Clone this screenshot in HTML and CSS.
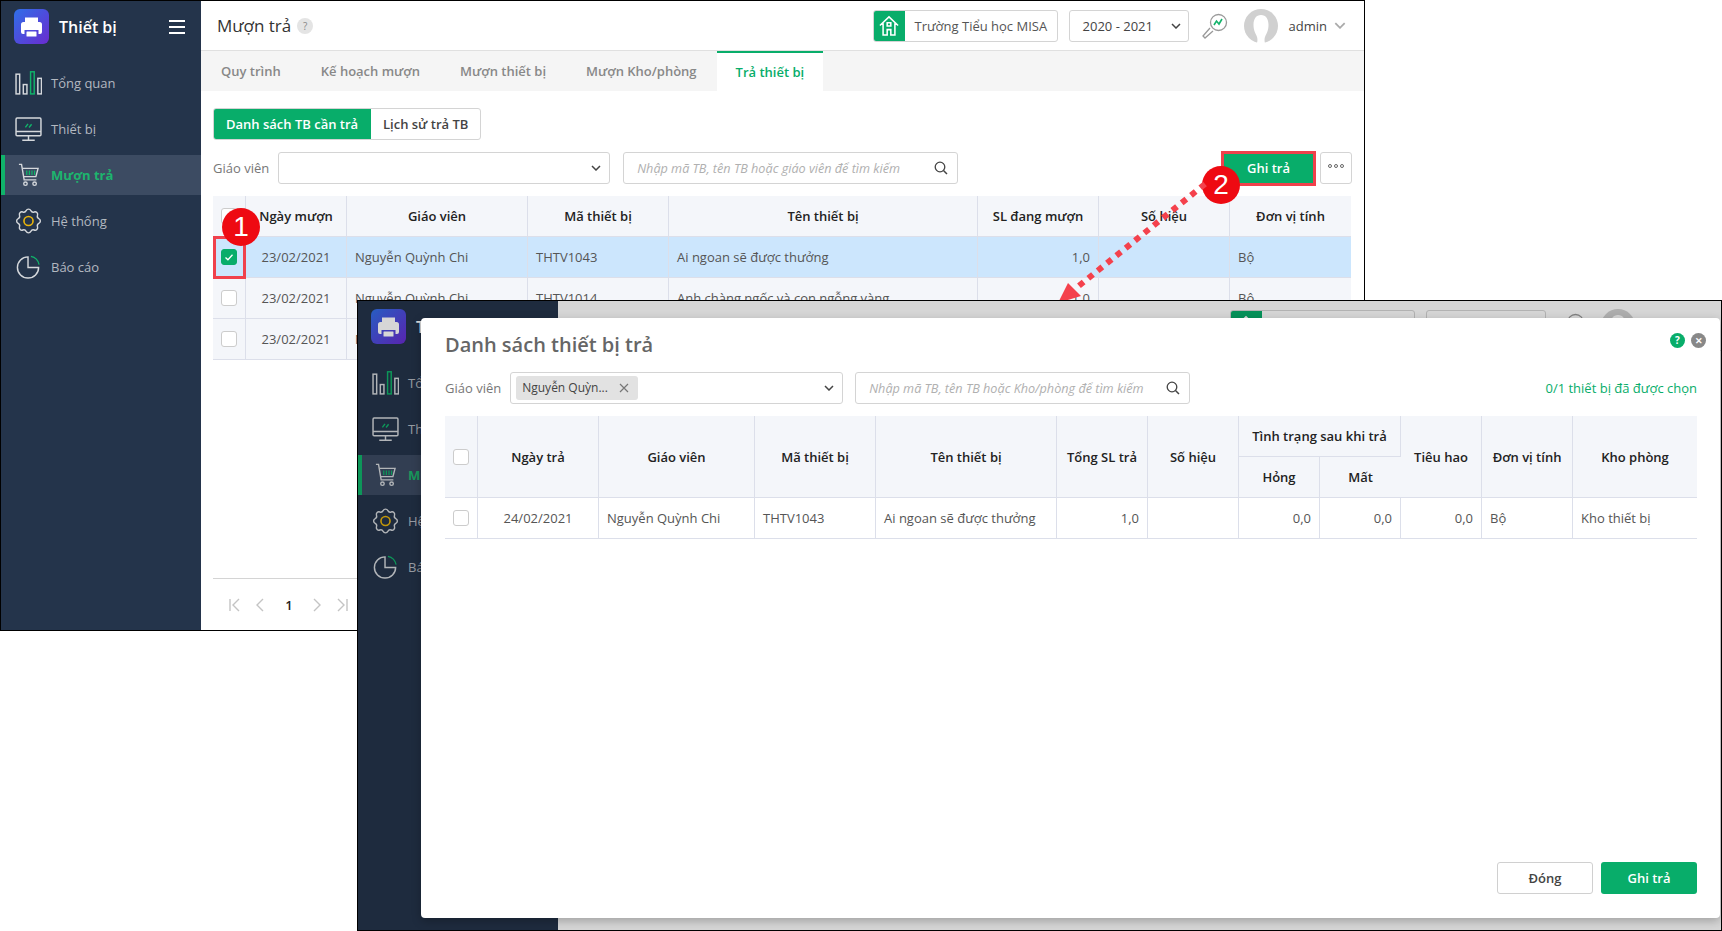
FILE: index.html
```html
<!DOCTYPE html>
<html lang="vi">
<head>
<meta charset="utf-8">
<title>Mượn trả</title>
<link rel="stylesheet" href="styles.css">
</head>
<body>
<svg class="defs" width="0" height="0" aria-hidden="true">
  <defs>
    <linearGradient id="logoGrad" x1="0" y1="0" x2="1" y2="1">
      <stop offset="0" stop-color="#2f6fe8"/><stop offset="1" stop-color="#6a2bd0"/>
    </linearGradient>
  </defs>
  <symbol id="i-logo" viewBox="0 0 35 35">
    <rect width="35" height="35" rx="6" fill="url(#logoGrad)"/>
    <path d="M11 13V8.500h13V13z" fill="#fff"/>
    <path d="M9.500 13h16a2.500 2.500 0 0 1 2.500 2.500V23a2 2 0 0 1-2 2h-1.500v-4h-14v4H9a2 2 0 0 1-2-2v-7.500A2.500 2.500 0 0 1 9.500 13z" fill="#fff"/>
    <rect x="12.500" y="22.500" width="10" height="5" rx=".5" fill="#fff"/>
  </symbol>
  <symbol id="i-bars" viewBox="0 0 26 23">
    <g fill="none" stroke="#d5d8dc" stroke-width="1.400">
      <rect x="1" y="3" width="3.500" height="19"/>
      <rect x="8" y="13" width="3.500" height="9"/>
      <rect x="22" y="7" width="3.500" height="15"/>
      <rect x="15" y=".7" width="3.500" height="21.300" stroke="#10b36a"/>
    </g>
  </symbol>
  <symbol id="i-monitor" viewBox="0 0 26 23">
    <g fill="none" stroke="#d5d8dc" stroke-width="1.400">
      <rect x="1" y="1" width="24" height="17" rx="1"/>
      <path d="M1 14h24M13 18v4M7 22.300h12"/>
    </g>
    <path d="M10 10l2.500-3.500M13.500 10l2.500-3" stroke="#10b36a" stroke-width="1.400" fill="none"/>
  </symbol>
  <symbol id="i-cart" viewBox="-3.500 -3 31 34" preserveAspectRatio="none">
    <g fill="none" stroke="#d5d8dc" stroke-width="1.600">
      <path d="M1 1h3l3 19h14"/>
      <path d="M5 6h18l-2.500 10H6.500"/>
      <circle cx="8.500" cy="24.500" r="2"/><circle cx="19" cy="24.500" r="2"/>
    </g>
    <path d="M10 8.500v5.500M13 8.500v5.500M16 8.500v5.500M19 8.500v5.500" stroke="#10b36a" stroke-width="1.400"/>
  </symbol>
  <symbol id="i-gear" viewBox="0.500 0.500 25 25">
    <path d="M22.550 10.800A2.400 2.400 0 0 1 22.550 15.200A2.500 2.500 0 0 0 21.310 18.190A2.400 2.400 0 0 1 18.190 21.310A2.500 2.500 0 0 0 15.200 22.550A2.400 2.400 0 0 1 10.800 22.550A2.500 2.500 0 0 0 7.810 21.310A2.400 2.400 0 0 1 4.690 18.190A2.500 2.500 0 0 0 3.450 15.200A2.400 2.400 0 0 1 3.450 10.800A2.500 2.500 0 0 0 4.690 7.810A2.400 2.400 0 0 1 7.810 4.690A2.500 2.500 0 0 0 10.800 3.450A2.400 2.400 0 0 1 15.200 3.450A2.500 2.500 0 0 0 18.190 4.690A2.400 2.400 0 0 1 21.310 7.810A2.500 2.500 0 0 0 22.550 10.800Z" fill="none" stroke="#d5d8dc" stroke-width="1.300" stroke-linejoin="round"/>
    <circle cx="13" cy="13" r="4.200" fill="none" stroke="#e9b40c" stroke-width="1.500"/>
  </symbol>
  <symbol id="i-pie" viewBox="-1 -1 28 28">
    <path d="M12.500 2.500a11 11 0 1 0 11 11h-11z" fill="none" stroke="#d5d8dc" stroke-width="1.500"/>
    <path d="M15.500 2a11 11 0 0 1 8.500 8.500" fill="none" stroke="#10b36a" stroke-width="1.300"/>
  </symbol>
  <symbol id="i-home" viewBox="0 0 22 24">
    <path d="M1 11.500L11 2l10 9.500M4.500 9v13h4.500v-6h4v6h4.500V9M9 8.500h4v3.500H9z" fill="none" stroke="#fff" stroke-width="1.700"/>
  </symbol>
  <symbol id="i-scope" viewBox="0 0 26 26">
    <circle cx="16.500" cy="9.500" r="8" fill="none" stroke="#9a9a9a" stroke-width="1.300"/>
    <path d="M11 18l-8 7-2-2 7-8" fill="none" stroke="#9a9a9a" stroke-width="1.300"/>
    <path d="M12 12l2.500-4 2.500 3 3-5" fill="none" stroke="#14b36b" stroke-width="1.600"/>
  </symbol>
  <symbol id="i-user" viewBox="0 0 34 34">
    <circle cx="17" cy="17" r="17" fill="#d0d0d0"/>
    <path d="M17 6c-5 0-7.500 4-7.500 10 0 6 2.500 9 3.500 12 1 3 0 6 0 6h8s-1-3 0-6 3.500-6 3.500-12c0-6-2.500-10-7.500-10z" fill="#fff"/>
  </symbol>
  <symbol id="i-search" viewBox="0 0 14 14">
    <circle cx="6" cy="6" r="4.800" fill="none" stroke="#444" stroke-width="1.300"/>
    <path d="M9.500 9.500l3.500 3.500" stroke="#444" stroke-width="1.500"/>
  </symbol>
  <symbol id="i-chev" viewBox="0 0 10 6">
    <path d="M1 1l4 4 4-4" fill="none" stroke="#444" stroke-width="1.500"/>
  </symbol>
  <symbol id="i-check" viewBox="0 0 16 16">
    <path d="M4 8.500l2.800 2.700L12 5.500" fill="none" stroke="#fff" stroke-width="1.500"/>
  </symbol>
</svg>

<section class="window window-back">
  <aside class="sidebar">
    <div class="brand">
      <svg class="logo"><use href="#i-logo"/></svg>
      <span class="brand-name">Thiết bị</span>
      <span class="burger"><i></i><i></i><i></i></span>
    </div>
    <nav class="nav">
      <a class="nav-item"><svg class="nav-icon"><use href="#i-bars"/></svg><span>Tổng quan</span></a>
      <a class="nav-item"><svg class="nav-icon"><use href="#i-monitor"/></svg><span>Thiết bị</span></a>
      <a class="nav-item active"><svg class="nav-icon"><use href="#i-cart"/></svg><span>Mượn trả</span></a>
      <a class="nav-item"><svg class="nav-icon"><use href="#i-gear"/></svg><span>Hệ thống</span></a>
      <a class="nav-item"><svg class="nav-icon"><use href="#i-pie"/></svg><span>Báo cáo</span></a>
    </nav>
  </aside>
  <main class="main">
    <header class="topbar">
      <h1 class="page-title">Mượn trả</h1>
      <span class="help-dot">?</span>
      <div class="topbar-right">
        <div class="school"><span class="school-icon"><svg class="home"><use href="#i-home"/></svg></span><span class="school-name">Trường Tiểu học MISA</span></div>
        <div class="year"><span>2020 - 2021</span><svg class="chev"><use href="#i-chev"/></svg></div>
        <svg class="scope"><use href="#i-scope"/></svg>
        <svg class="avatar"><use href="#i-user"/></svg>
        <span class="user-name">admin</span>
        <svg class="chev chev-light"><use href="#i-chev"/></svg>
      </div>
    </header>
    <div class="tabs">
      <a class="tab">Quy trình</a>
      <a class="tab">Kế hoạch mượn</a>
      <a class="tab">Mượn thiết bị</a>
      <a class="tab">Mượn Kho/phòng</a>
      <a class="tab current">Trả thiết bị</a>
    </div>
    <div class="content">
      <div class="toggle">
        <span class="toggle-on">Danh sách TB cần trả</span>
        <span class="toggle-off">Lịch sử trả TB</span>
      </div>
      <div class="toolbar">
        <label class="field-label">Giáo viên</label>
        <div class="select select-teacher"><svg class="chev"><use href="#i-chev"/></svg></div>
        <div class="search search-back"><span class="placeholder">Nhập mã TB, tên TB hoặc giáo viên để tìm kiếm</span><svg class="search-icon"><use href="#i-search"/></svg></div>
        <div class="save-wrap"><button class="btn-primary btn-save">Ghi trả</button></div>
        <button class="btn-more"><i></i><i></i><i></i></button>
      </div>
      <table class="grid grid-back">
        <colgroup>
          <col class="b1"><col class="b2"><col class="b3"><col class="b4"><col class="b5"><col class="b6"><col class="b7"><col class="b8">
        </colgroup>
        <thead>
          <tr><th><span class="check"></span></th><th>Ngày mượn</th><th>Giáo viên</th><th>Mã thiết bị</th><th>Tên thiết bị</th><th>SL đang mượn</th><th>Số hiệu</th><th>Đơn vị tính</th></tr>
        </thead>
        <tbody>
          <tr class="selected"><td class="c"><span class="check on"><svg class="tick"><use href="#i-check"/></svg></span></td><td class="c">23/02/2021</td><td>Nguyễn Quỳnh Chi</td><td>THTV1043</td><td>Ai ngoan sẽ được thưởng</td><td class="r">1,0</td><td></td><td>Bộ</td></tr>
          <tr><td class="c"><span class="check"></span></td><td class="c">23/02/2021</td><td>Nguyễn Quỳnh Chi</td><td>THTV1014</td><td>Anh chàng ngốc và con ngỗng vàng</td><td class="r">1,0</td><td></td><td>Bộ</td></tr>
          <tr><td class="c"><span class="check"></span></td><td class="c">23/02/2021</td><td>Nguyễn Quỳnh Chi</td><td></td><td></td><td class="r"></td><td></td><td></td></tr>
        </tbody>
      </table>
      <footer class="pager">
        <svg class="pager-icon" viewBox="0 0 12 14"><path d="M1 1v12M10 1L4 7l6 6" fill="none" stroke="#c4c4c4" stroke-width="1.400"/></svg>
        <svg class="pager-icon" viewBox="0 0 12 14"><path d="M9 1L3 7l6 6" fill="none" stroke="#c4c4c4" stroke-width="1.400"/></svg>
        <span class="pager-num">1</span>
        <svg class="pager-icon" viewBox="0 0 12 14"><path d="M3 1l6 6-6 6" fill="none" stroke="#c4c4c4" stroke-width="1.400"/></svg>
        <svg class="pager-icon" viewBox="0 0 12 14"><path d="M11 1v12M2 1l6 6-6 6" fill="none" stroke="#c4c4c4" stroke-width="1.400"/></svg>
      </footer>
    </div>
  </main>
</section>

<div class="mark-box"></div>
<span class="badge badge-one">1</span>
<span class="badge badge-two">2</span>
<svg class="arrow" width="1722" height="931" viewBox="0 0 1722 931">
  <line x1="1205" y1="184" x2="1075" y2="289" stroke="#f4414c" stroke-width="6" stroke-dasharray="6 6"/>
  <polygon points="1068,283 1081,296 1058,303" fill="#f4414c"/>
</svg>

<section class="window window-front">
  <aside class="sidebar">
    <div class="brand">
      <svg class="logo"><use href="#i-logo"/></svg>
      <span class="brand-name">Thiết bị</span>
    </div>
    <nav class="nav">
      <a class="nav-item"><svg class="nav-icon"><use href="#i-bars"/></svg><span>Tổng quan</span></a>
      <a class="nav-item"><svg class="nav-icon"><use href="#i-monitor"/></svg><span>Thiết bị</span></a>
      <a class="nav-item active"><svg class="nav-icon"><use href="#i-cart"/></svg><span>Mượn trả</span></a>
      <a class="nav-item"><svg class="nav-icon"><use href="#i-gear"/></svg><span>Hệ thống</span></a>
      <a class="nav-item"><svg class="nav-icon"><use href="#i-pie"/></svg><span>Báo cáo</span></a>
    </nav>
  </aside>
  <main class="main">
    <header class="topbar">
      <h2 class="page-title">Mượn trả</h2>
      <span class="help-dot">?</span>
      <div class="topbar-right">
        <div class="school"><span class="school-icon"><svg class="home"><use href="#i-home"/></svg></span><span class="school-name">Trường Tiểu học MISA</span></div>
        <div class="year"><span>2020 - 2021</span><svg class="chev"><use href="#i-chev"/></svg></div>
        <svg class="scope"><use href="#i-scope"/></svg>
        <svg class="avatar"><use href="#i-user"/></svg>
        <span class="user-name">admin</span>
        <svg class="chev chev-light"><use href="#i-chev"/></svg>
      </div>
    </header>
  </main>
  <div class="scrim"></div>
  <div class="modal">
    <div class="modal-head">
      <h2 class="modal-title">Danh sách thiết bị trả</h2>
      <span class="modal-actions"><span class="round round-help">?</span><span class="round round-close">✕</span></span>
    </div>
    <div class="toolbar toolbar-modal">
      <label class="field-label">Giáo viên</label>
      <div class="select select-chip">
        <span class="chip"><span>Nguyễn Quỳn...</span><svg class="chip-x" viewBox="0 0 10 10"><path d="M1 1l8 8M9 1l-8 8" stroke="#777" stroke-width="1.200"/></svg></span>
        <svg class="chev"><use href="#i-chev"/></svg>
      </div>
      <div class="search search-front"><span class="placeholder">Nhập mã TB, tên TB hoặc Kho/phòng để tìm kiếm</span><svg class="search-icon"><use href="#i-search"/></svg></div>
      <span class="picked">0/1 thiết bị đã được chọn</span>
    </div>
    <table class="grid grid-front">
      <colgroup>
        <col class="f1"><col class="f2"><col class="f3"><col class="f4"><col class="f5"><col class="f6"><col class="f7"><col class="f8"><col class="f9"><col class="f10"><col class="f11"><col class="f12">
      </colgroup>
      <thead>
        <tr class="head-top">
          <th rowspan="2"><span class="check"></span></th><th rowspan="2">Ngày trả</th><th rowspan="2">Giáo viên</th><th rowspan="2">Mã thiết bị</th><th rowspan="2">Tên thiết bị</th><th rowspan="2">Tổng SL trả</th><th rowspan="2">Số hiệu</th><th colspan="2">Tình trạng sau khi trả</th><th rowspan="2">Tiêu hao</th><th rowspan="2">Đơn vị tính</th><th rowspan="2">Kho phòng</th>
        </tr>
        <tr class="head-sub"><th>Hỏng</th><th>Mất</th></tr>
      </thead>
      <tbody>
        <tr><td class="c"><span class="check"></span></td><td class="c">24/02/2021</td><td>Nguyễn Quỳnh Chi</td><td>THTV1043</td><td>Ai ngoan sẽ được thưởng</td><td class="r">1,0</td><td></td><td class="r">0,0</td><td class="r">0,0</td><td class="r">0,0</td><td>Bộ</td><td>Kho thiết bị</td></tr>
      </tbody>
    </table>
    <div class="modal-foot">
      <button class="btn-ghost">Đóng</button>
      <button class="btn-primary btn-foot">Ghi trả</button>
    </div>
  </div>
</section>
</body>
</html>
```

FILE: styles.css
```css
* { box-sizing: border-box; }
html, body { margin: 0; padding: 0; }
body {
  width: 1722px; height: 931px; overflow: hidden; position: relative;
  background: #fff; color: #555;
  font: 13px/18px "Open Sans", "Noto Sans", sans-serif;
}
.defs { position: absolute; }
h1, h2 { margin: 0; font-weight: 400; }

/* desktop windows */
.window {
  position: absolute; display: flex; overflow: hidden;
  border: 1px solid #000; background: #fff;
}
.window-back { left: 0; top: 0; width: 1365px; height: 631px; }
.window-front { left: 357px; top: 300px; width: 1365px; height: 631px; }

/* sidebar */
.sidebar { flex: 0 0 200px; background: #24344b; color: #b3b8c0; }
.brand { display: flex; align-items: center; height: 51px; padding: 0 0 0 13px; position: relative; }
.logo { width: 35px; height: 35px; }
.brand-name { margin-left: 10px; font-size: 16px; font-weight: 600; color: #fff; }
.burger { display: flex; flex-direction: column; gap: 4px; margin-left: auto; margin-right: 16px; }
.burger i { display: block; width: 16px; height: 2px; background: #fff; }
.nav { display: flex; flex-direction: column; gap: 6px; padding-top: 11px; }
.nav-item { display: flex; align-items: center; height: 40px; padding-left: 14px; }
.nav-item span { margin-left: 9px; }
.nav-icon { width: 27px; height: 28px; flex: none; }
.nav-item.active { background: #3c4b62; border-left: 4px solid #10b36a; padding-left: 10px; color: #1db56e; font-weight: 700; }

/* top bar */
.main { flex: 1; min-width: 0; display: flex; flex-direction: column; }
.topbar { flex: none; height: 50px; display: flex; align-items: center; padding: 0 18px 0 16px; border-bottom: 1px solid #e0e0e0; }
.page-title { font-size: 17px; color: #333; }
.help-dot {
  width: 16px; height: 16px; margin-left: 6px; border-radius: 50%;
  background: #e4e4e4; color: #888; font-size: 10px; line-height: 16px; text-align: center;
}
.topbar-right { display: flex; align-items: center; margin-left: auto; }
.school { display: flex; align-items: center; width: 185px; height: 32px; border: 1px solid #d4d4d4; border-radius: 3px; overflow: hidden; }
.school-icon { flex: none; display: flex; align-items: center; justify-content: center; width: 31px; height: 32px; background: #08ad6a; }
.home { width: 20px; height: 24px; }
.school-name { margin-left: 10px; color: #555; white-space: nowrap; }
.year { display: flex; align-items: center; justify-content: space-between; width: 120px; height: 32px; margin-left: 11px; padding: 0 7px 0 13px; border: 1px solid #d4d4d4; border-radius: 3px; color: #444; }
.chev { width: 10px; height: 6px; flex: none; }
.chev-light { width: 12px; height: 7px; margin-left: 7px; opacity: .45; }
.scope { width: 26px; height: 26px; margin-left: 13px; }
.avatar { width: 34px; height: 34px; margin-left: 16px; }
.user-name { margin-left: 11px; color: #444; }

/* tabs */
.tabs { flex: none; display: flex; height: 40px; background: #f5f5f5; padding-left: 20px; }
.tab { display: flex; align-items: center; color: #888; font-weight: 600; margin-right: 40px; white-space: nowrap; }
.tab.current { margin: 0 0 0 -20px; padding: 0 19px; background: #fff; border-top: 2px solid #08ad6a; color: #08ad6a; }

/* page content */
.content { flex: 1; min-height: 0; display: flex; flex-direction: column; padding: 17px 12px 0; }
.toggle { display: flex; align-self: flex-start; height: 32px; border: 1px solid #d4d4d4; border-radius: 3px; overflow: hidden; font-weight: 600; }
.toggle-on { display: flex; align-items: center; width: 157px; height: 100%; padding-left: 12px; background: #08ad6a; color: #fff; white-space: nowrap; }
.toggle-off { display: flex; align-items: center; width: 109px; padding-left: 12px; color: #444; white-space: nowrap; }
.toolbar { display: flex; align-items: center; height: 32px; margin-top: 12px; }
.field-label { color: #777; white-space: nowrap; }
.select { display: flex; align-items: center; justify-content: flex-end; height: 32px; padding-right: 8px; border: 1px solid #d4d4d4; border-radius: 3px; }
.select-teacher { width: 332px; margin-left: 9px; }
.search { display: flex; align-items: center; justify-content: space-between; height: 32px; padding: 0 9px 0 13px; border: 1px solid #d4d4d4; border-radius: 3px; }
.search-back { width: 335px; margin-left: 13px; }
.placeholder { color: #b0b0b0; font-style: italic; font-size: 12.65px; line-height: 20px; white-space: nowrap; }
.search-icon { width: 14px; height: 14px; flex: none; }
.save-wrap { margin-left: auto; border: 3px solid #f0414c; width: 95px; height: 35px; padding: 0; }
.btn-primary { border: 0; border-radius: 3px; background: #08ad6a; color: #fff; font: 600 13px "Open Sans", sans-serif; }
.btn-save { display: block; width: 100%; height: 100%; border-radius: 0; }
.btn-more { display: flex; align-items: center; justify-content: center; gap: 2px; width: 32px; height: 32px; margin-left: 4px; background: #fff; border: 1px solid #d4d4d4; border-radius: 3px; padding: 0 0 4px; }
.btn-more i { width: 4px; height: 4px; border: 1px solid #666; border-radius: 50%; }

/* tables */
.grid { table-layout: fixed; border-collapse: separate; border-spacing: 0; }
.grid th { height: 41px; padding: 0 4px; background: #f4f6fa; color: #222; font-weight: 600; text-align: center; border-right: 1px solid #dcdfea; border-bottom: 1px solid #dcdfea; white-space: nowrap; }
.grid td { height: 41px; padding: 0 8px; color: #555; border-right: 1px solid #dcdfea; border-bottom: 1px solid #dcdfea; white-space: nowrap; overflow: hidden; }
.grid th:last-child, .grid td:last-child { border-right: 0; }
.grid .c { text-align: center; }
.grid .r { text-align: right; }
.check { display: block; margin: 0 auto; width: 16px; height: 16px; border: 1px solid #ccc; border-radius: 3px; background: #fff; }
.check.on { background: #08ad6a; border-color: #08ad6a; }
.tick { display: block; width: 14px; height: 14px; }
.grid-back { width: 1138px; margin-top: 12px; }
.grid-back tbody td { background: #f4f6fa; }
.grid-back tbody tr.selected td { background: #cce6fd; }
.b1 { width: 33px; } .b2 { width: 101px; } .b3 { width: 181px; } .b4 { width: 141px; }
.b5 { width: 309px; } .b6 { width: 121px; } .b7 { width: 131px; } .b8 { width: 121px; }

/* pager */
.pager { display: flex; align-items: center; height: 52px; margin-top: auto; border-top: 1px solid #d4d4d4; padding-left: 16px; }
.pager-icon { width: 12px; height: 14px; margin-right: 13px; }
.pager-num { width: 12px; margin: 0 16px 0 4px; color: #222; font-weight: 600; text-align: center; }

/* annotations */
.mark-box { position: absolute; left: 213px; top: 236px; width: 33px; height: 43px; border: 3px solid #f0414c; }
.badge { position: absolute; width: 38px; height: 38px; border-radius: 50%; background: #ee0a12; color: #fff; font: 28px/38px "Liberation Sans", sans-serif; text-align: center; }
.badge-one { left: 222px; top: 208px; }
.badge-two { left: 1202px; top: 166px; }
.arrow { position: absolute; left: 0; top: 0; pointer-events: none; }

/* dimmed front window + dialog */
.scrim { position: absolute; inset: 0; background: rgba(0, 0, 0, .16); }
.modal {
  position: absolute; left: 63px; top: 17px; width: 1299px; height: 600px;
  display: flex; flex-direction: column; padding: 0 23px 24px 24px;
  background: #fff; border-radius: 4px; box-shadow: 0 3px 10px rgba(0, 0, 0, .25);
}
.modal-head { flex: none; display: flex; align-items: center; justify-content: space-between; height: 54px; }
.modal-title { font-size: 20px; font-weight: 600; color: #666; }
.modal-actions { display: flex; gap: 6px; margin-right: -9px; margin-top: -10px; }
.round { width: 15px; height: 15px; border-radius: 50%; color: #fff; font: 700 10px/15px "Open Sans", sans-serif; text-align: center; }
.round-help { background: #08ad6a; }
.round-close { background: #888; font-size: 9px; }
.toolbar-modal { margin-top: 0; }
.select-chip { width: 333px; margin-left: 9px; justify-content: space-between; padding-left: 5px; }
.chip { display: flex; align-items: center; justify-content: space-between; width: 122px; height: 24px; padding: 0 9px 0 6px; background: #e2e2e2; border-radius: 3px; color: #444; font-size: 12px; }
.chip-x { width: 10px; height: 10px; }
.search-front { width: 335px; margin-left: 12px; }
.picked { margin-left: auto; color: #08ad6a; }
.grid-front { width: 1252px; margin-top: 12px; }
.head-top th { height: 41px; }
.f1 { width: 33px; } .f2 { width: 121px; } .f3 { width: 156px; } .f4 { width: 121px; }
.f5 { width: 181px; } .f6 { width: 91px; } .f7 { width: 91px; } .f8 { width: 81px; }
.f9 { width: 81px; } .f10 { width: 81px; } .f11 { width: 91px; } .f12 { width: 124px; }
.modal-foot { margin-top: auto; display: flex; justify-content: flex-end; gap: 8px; }
.btn-ghost { width: 96px; height: 32px; background: #fff; border: 1px solid #d0d0d0; border-radius: 3px; color: #444; font: 600 13px "Open Sans", sans-serif; }
.btn-foot { width: 96px; height: 32px; }
```
